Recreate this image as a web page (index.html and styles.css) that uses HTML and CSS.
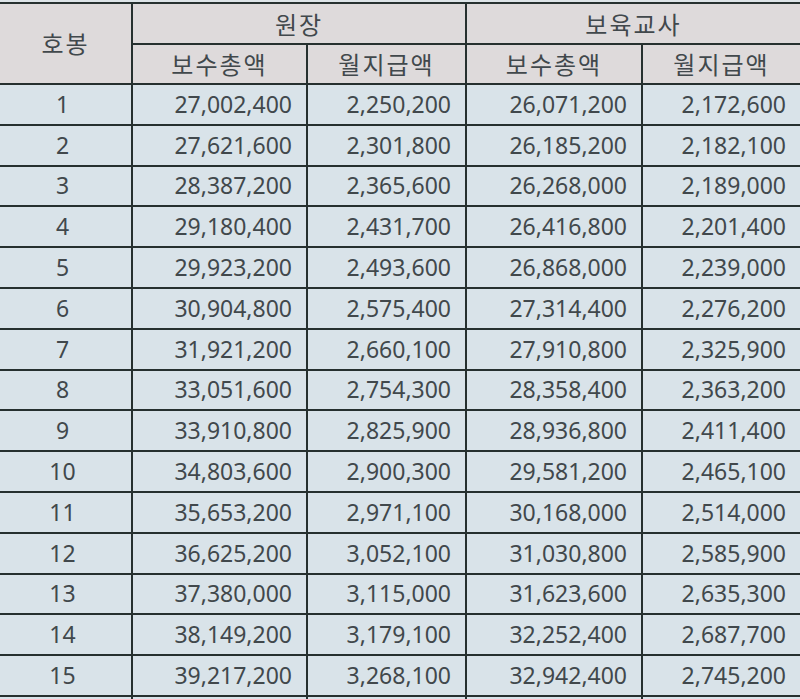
FILE: index.html
```html
<!DOCTYPE html>
<html lang="ko">
<head>
<meta charset="utf-8">
<title>호봉표</title>
<link rel="stylesheet" href="styles.css">
</head>
<body>
<div class="sheet">
<table class="pay">
<colgroup>
<col class="c-step"><col class="c-a"><col class="c-b"><col class="c-c"><col class="c-d">
</colgroup>
<thead>
<tr class="h1"><th rowspan="2" class="step-h">호봉</th><th colspan="2">원장</th><th colspan="2">보육교사</th></tr>
<tr class="h2"><th>보수총액</th><th>월지급액</th><th>보수총액</th><th>월지급액</th></tr>
</thead>
<tbody>
<tr><td class="step">1</td><td>27,002,400</td><td>2,250,200</td><td>26,071,200</td><td>2,172,600</td></tr>
<tr><td class="step">2</td><td>27,621,600</td><td>2,301,800</td><td>26,185,200</td><td>2,182,100</td></tr>
<tr><td class="step">3</td><td>28,387,200</td><td>2,365,600</td><td>26,268,000</td><td>2,189,000</td></tr>
<tr><td class="step">4</td><td>29,180,400</td><td>2,431,700</td><td>26,416,800</td><td>2,201,400</td></tr>
<tr><td class="step">5</td><td>29,923,200</td><td>2,493,600</td><td>26,868,000</td><td>2,239,000</td></tr>
<tr><td class="step">6</td><td>30,904,800</td><td>2,575,400</td><td>27,314,400</td><td>2,276,200</td></tr>
<tr><td class="step">7</td><td>31,921,200</td><td>2,660,100</td><td>27,910,800</td><td>2,325,900</td></tr>
<tr><td class="step">8</td><td>33,051,600</td><td>2,754,300</td><td>28,358,400</td><td>2,363,200</td></tr>
<tr><td class="step">9</td><td>33,910,800</td><td>2,825,900</td><td>28,936,800</td><td>2,411,400</td></tr>
<tr><td class="step">10</td><td>34,803,600</td><td>2,900,300</td><td>29,581,200</td><td>2,465,100</td></tr>
<tr><td class="step">11</td><td>35,653,200</td><td>2,971,100</td><td>30,168,000</td><td>2,514,000</td></tr>
<tr><td class="step">12</td><td>36,625,200</td><td>3,052,100</td><td>31,030,800</td><td>2,585,900</td></tr>
<tr><td class="step">13</td><td>37,380,000</td><td>3,115,000</td><td>31,623,600</td><td>2,635,300</td></tr>
<tr><td class="step">14</td><td>38,149,200</td><td>3,179,100</td><td>32,252,400</td><td>2,687,700</td></tr>
<tr><td class="step">15</td><td>39,217,200</td><td>3,268,100</td><td>32,942,400</td><td>2,745,200</td></tr>
<tr><td class="step"></td><td></td><td></td><td></td><td></td></tr>
</tbody>
</table>
</div>
</body>
</html>
```
FILE: styles.css
```css
html, body {
  margin: 0;
  padding: 0;
  background: #dde4e8;
}
.sheet {
  width: 800px;
  height: 699px;
  overflow: hidden;
  padding-top: 2px;
  box-sizing: border-box;
}
.pay {
  border-collapse: collapse;
  table-layout: fixed;
  width: 801px;
  font-family: "Noto Sans", "Noto Sans CJK KR", sans-serif;
  color: #41484c;
  font-size: 23px;
}
.c-step { width: 132px; }
.c-a { width: 175px; }
.c-b { width: 159px; }
.c-c { width: 176px; }
.c-d { width: 159px; }
.pay th, .pay td {
  border: 2px solid #26302f;
  padding: 0;
}
.pay th {
  background: #dedadb;
  font-family: "Noto Sans CJK KR", sans-serif;
  font-weight: 400;
  font-size: 24px;
  letter-spacing: 2px;
  line-height: 1;
}
.pay .h1 th { height: 39px; }
.pay .h2 th { height: 38px; }
.pay th.step-h {
  border-left: none;
  padding-bottom: 2px;
}
.pay td {
  background: #d9e3e9;
  height: 38.8px;
  text-align: right;
  padding-right: 14px;
  line-height: 1;
}
.pay td.step {
  text-align: center;
  padding-right: 6px;
  border-left: none;
}
```
